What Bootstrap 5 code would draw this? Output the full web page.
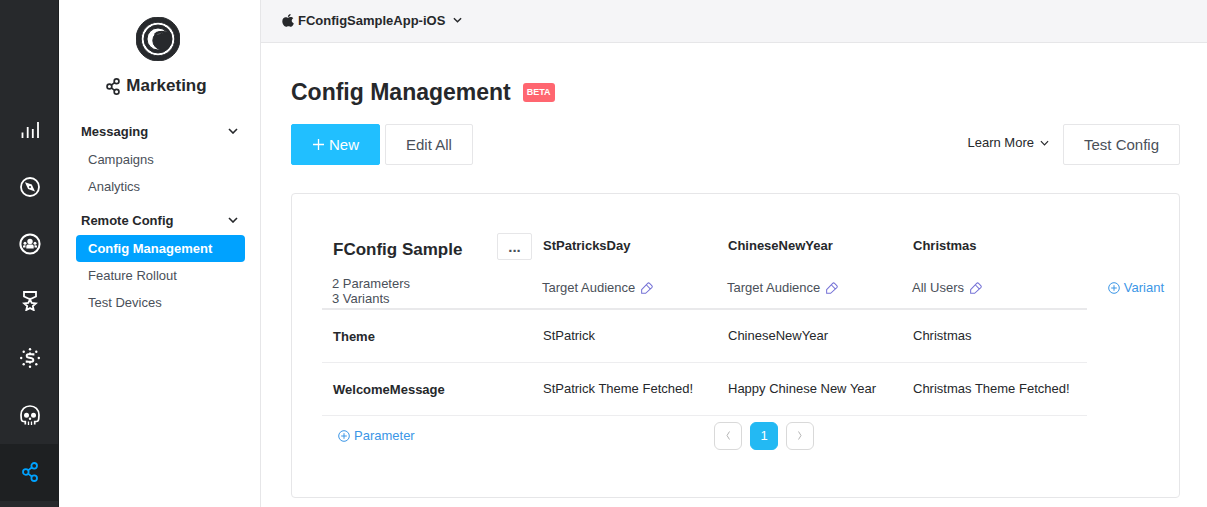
<!DOCTYPE html>
<html lang="en">
<head>
<meta charset="utf-8">
<meta name="viewport" content="width=device-width, initial-scale=1">
<title>Config Management</title>
<link href="https://cdn.jsdelivr.net/npm/bootstrap@5.3.0/dist/css/bootstrap.min.css" rel="stylesheet">
<style>
  body { font: 13px/15px "Liberation Sans", Arial, sans-serif; color: #26282b; background: #fff; }
  svg { display: block; flex: none; fill: none; stroke: currentColor; }
  a { text-decoration: none; }
  .btn-plain { border: 0; padding: 0; font-size: 13px; line-height: 15px; color: #26282b; }

  .rail { width: 59px; padding-top: 102px; background: #27292c; border-right: 1px solid #1d1f21; }
  .rail a { height: 57px; padding: 0 0 2px 1px; color: #fff; }
  .rail a.active { background: #1e2022; color: #00a2ff; }

  .side { width: 202px; padding: 17px 15px 0 17px; border-right: 1px solid #e6e6e8; }
  .side-logo { margin-right: 5px; }
  .side-title { font-size: 17px; line-height: 20px; margin: 15px 8px 22px 0; gap: 6px; }
  .group { margin-bottom: 7px; }
  .group-head { height: 28px; padding: 0 7px 2px 5px; font-weight: bold; }
  .group a { height: 27px; padding: 0 12px; color: #4a5059; border-radius: 4px; }
  .group a.active { background: #00a2ff; color: #fff; font-weight: bold; }

  .topbar { height: 43px; padding: 0 21px 2px; background: #f5f5f7; border-bottom: 1px solid #e6e6e8; }
  .page { padding: 34px 27px 9px 30px; }
  .page-head { gap: 12px; }
  .page-title { font-size: 23px; line-height: 30px; font-weight: bold; }
  .beta { background: #ff6670; font-size: 9px; line-height: 11px; padding: 4px; border-radius: 3px; }
  .btn-tall { height: 41px; padding: 0 20px; font-size: 15px; line-height: 20px; border-radius: 2px; color: #4a5059; border-color: #e6e6e8; }
  .btn-new { background: #21bfff; border-color: #21bfff; color: #fff; }
  .toolbar { margin: 17px 0 28px; gap: 5px; }
  .learn { gap: 6px; margin: 0 9px 4px auto; }

  .panel { border: 1px solid #e6e6e8; border-radius: 4px; padding: 39px 15px 47px 30px; }
  .config { table-layout: fixed; width: 100%; }
  .config th, .config td { padding: 0 11px; vertical-align: middle; overflow-wrap: break-word; }
  .config .first-col { width: 210px; }
  .config thead .names th { height: 27px; padding-bottom: 3px; }
  .config thead .names th:first-child { padding: 0 0 0 11px; }
  .config thead .targets td { padding: 16px 10px 2px; color: #4a5059; }
  .config thead { border-bottom: 2px solid #e9e9eb; }
  .config tbody tr { height: 53px; border-bottom: 1px solid #ededef; }
  .config tbody th { padding-top: 2px; }
  .sample { font-size: 17px; line-height: 20px; font-weight: bold; }
  .btn-more { width: 35px; height: 27px; padding: 0; border-color: #e6e6e8; border-radius: 2px; font-size: 15px; line-height: 20px; font-weight: bold; color: #4a5059; }
  .target { gap: 6px; padding-bottom: 7px; }
  .edit { color: #7471d6; }
  .add { color: #3b96e6; }
  .add-variant { width: 77px; padding-top: 47px; }
  .add-param { width: 119px; padding-left: 16px; }
  .table-foot { padding-top: 6px; }
  .pages .page-link { width: 28px; height: 28px; padding: 0; border-radius: 6px; border-color: #d9d9d9; color: #b4b4b4; background: #fff; font-size: 13px; line-height: 15px; }
  .pages .page-item:not(:first-child) .page-link { margin-left: 0; }
  .pages .active .page-link { background: #23b9f3; border-color: #23b9f3; color: #fff; }
</style>
</head>
<body>
<svg width="0" height="0" class="position-absolute" aria-hidden="true">
  <symbol id="chev" viewBox="0 0 10 6"><path d="M1 1l4 4 4-4"/></symbol>
  <symbol id="share" viewBox="0 0 16 20"><circle cx="3.800" cy="10" r="2.800"/><circle cx="12.200" cy="3.800" r="2.800"/><circle cx="12.200" cy="16.200" r="2.800"/><path d="M6 8.400l3.900-2.900M6 11.600l3.900 2.900"/></symbol>
  <symbol id="pen" viewBox="0 0 13 13"><path d="M.7 8.200L7.200 1.500a1.500 1.500 0 0 1 2.100 0l2.400 2.400a1.500 1.500 0 0 1 0 2.100L5 12.300H.7zM5.700 3l4.300 4.400" stroke-width="1.100"/></symbol>
  <symbol id="plus" viewBox="0 0 12 12"><circle cx="6" cy="6" r="5.300"/><path d="M6 3.200v5.600M3.200 6h5.600"/></symbol>
</svg>

<div class="d-flex min-vh-100">
  <nav class="rail d-flex flex-column flex-shrink-0" aria-label="Products">
    <a href="#" class="d-flex align-items-center justify-content-center" aria-label="Analytics">
      <svg width="18" height="18" viewBox="0 0 18 18" stroke-width="1.800"><path d="M1.500 17v-5.500M6.700 17V6M11.800 17V8M17 17V1"/></svg></a>
    <a href="#" class="d-flex align-items-center justify-content-center" aria-label="Explore">
      <svg width="20" height="20" viewBox="0 0 20 20" stroke-width="1.800"><circle cx="10" cy="10" r="9"/><path d="M5 5.300l6.800 2.200 3.200 7-6.900-2.400z" fill="currentColor" stroke="none"/><circle cx="10" cy="9.900" r="1" fill="#27292c" stroke="none"/></svg></a>
    <a href="#" class="d-flex align-items-center justify-content-center" aria-label="Audience">
      <svg width="22" height="22" viewBox="0 0 22 22" stroke-width="2"><circle cx="11" cy="11" r="9.600"/><g fill="currentColor" stroke="none"><circle cx="11" cy="8.500" r="2.700"/><path d="M7.300 15.500v-2c0-1.400 1-2 2.200-2h3c1.200 0 2.200.6 2.200 2v2z"/><circle cx="6" cy="10.200" r="1.500"/><circle cx="16" cy="10.200" r="1.500"/><path d="M4 14.500v-1c0-.9.600-1.300 1.300-1.300h1.200v2.300zM18 14.500v-1c0-.9-.6-1.300-1.300-1.300h-1.200v2.300z"/></g></svg></a>
    <a href="#" class="d-flex align-items-center justify-content-center" aria-label="Rewards">
      <svg width="16" height="20" viewBox="0 0 16 20" stroke-width="1.800"><path d="M2 1h12v4.500L8 8.300l-6-2.800z"/><path d="M8 8.300l1.700 3.500 4.200.5-3.100 2.700.9 4L8 17.100 4.300 19l.9-4-3.100-2.700 4.200-.5z"/></svg></a>
    <a href="#" class="d-flex align-items-center justify-content-center" aria-label="Revenue">
      <svg width="20" height="20" viewBox="0 0 20 20" stroke-width="2"><path d="M13.400 7.400V6.300H8.200c-1 0-1.500.6-1.500 1.600 0 1 .6 1.500 1.600 1.700l3.400.7c1 .2 1.600.7 1.600 1.700s-.6 1.700-1.600 1.700H6.700v-1.100M10 4.500v2M10 13.500v2"/><g fill="currentColor" stroke="none"><circle cx="10" cy="1.200" r="1.200"/><circle cx="10" cy="18.800" r="1.200"/><circle cx="1.200" cy="10" r="1.200"/><circle cx="18.800" cy="10" r="1.200"/><circle cx="3.700" cy="3.700" r="1.200"/><circle cx="16.300" cy="3.700" r="1.200"/><circle cx="3.700" cy="16.300" r="1.200"/><circle cx="16.300" cy="16.300" r="1.200"/></g></svg></a>
    <a href="#" class="d-flex align-items-center justify-content-center" aria-label="Crash">
      <svg width="20" height="20" viewBox="0 0 20 20" stroke-width="1.700"><path d="M5.300 19.500v-3H3.500c-1.500 0-2-1-2.200-2.500L1 10C1 4.500 5 1 10 1s9 3.500 9 9l-.3 4c-.2 1.500-.7 2.500-2.200 2.500h-1.800v3"/><path d="M8.500 20v-3.500M11.500 20v-3.500" stroke-width="1.300"/><g fill="currentColor" stroke="none"><circle cx="6.500" cy="10.300" r="2.500"/><circle cx="13.500" cy="10.300" r="2.500"/><circle cx="10" cy="13.800" r="1.200"/></g></svg></a>
    <a href="#" class="active d-flex align-items-center justify-content-center" aria-label="Marketing" aria-current="page">
      <svg width="16" height="20" stroke-width="1.800"><use href="#share"/></svg></a>
  </nav>

  <aside class="side flex-shrink-0">
    <div class="side-logo d-flex justify-content-center">
      <svg width="44" height="44" viewBox="0 0 44 44" stroke="none"><circle cx="22" cy="22" r="22" fill="#27292c"/><circle cx="22" cy="22" r="16.800" fill="#fff"/><circle cx="22" cy="22" r="14" fill="#27292c"/><circle cx="22" cy="22" r="11" fill="#fff"/><circle cx="26" cy="23.500" r="9.200" fill="#27292c"/><path d="M18.500 17.500C21 14.300 27 13.600 31.500 17.500" stroke="#27292c" stroke-width="1.500"/><path d="M20.500 17.800c2-2 5.300-2.500 8-1.500-3-.1-5 .4-6.500 1.800z" fill="#fff"/></svg>
    </div>
    <h2 class="side-title d-flex align-items-center justify-content-center fw-bold">
      <svg width="14" height="17" stroke-width="2"><use href="#share"/></svg>Marketing</h2>
    <div class="group">
      <button type="button" class="btn btn-plain group-head w-100 d-flex align-items-center justify-content-between">Messaging<svg width="10" height="6" stroke-width="1.600"><use href="#chev"/></svg></button>
      <a href="#" class="d-flex align-items-center">Campaigns</a>
      <a href="#" class="d-flex align-items-center">Analytics</a>
    </div>
    <div class="group">
      <button type="button" class="btn btn-plain group-head w-100 d-flex align-items-center justify-content-between">Remote Config<svg width="10" height="6" stroke-width="1.600"><use href="#chev"/></svg></button>
      <a href="#" class="active d-flex align-items-center" aria-current="page">Config Management</a>
      <a href="#" class="d-flex align-items-center">Feature Rollout</a>
      <a href="#" class="d-flex align-items-center">Test Devices</a>
    </div>
  </aside>

  <div class="flex-grow-1">
    <header class="topbar d-flex align-items-center">
      <button type="button" class="btn btn-plain d-flex align-items-center fw-bold">
        <svg class="me-1" width="12" height="13" viewBox="0 0 12 14" preserveAspectRatio="none"><path fill="currentColor" stroke="none" d="M8.600 0c.1 1.800-1.200 3.100-2.700 3.100C5.800 1.500 7.100.2 8.600 0zM6.100 4c.6 0 1.400-.7 2.600-.7 1 0 2 .5 2.600 1.400-2.300 1.300-1.900 4.500.5 5.400-.6 1.700-1.700 3.500-2.900 3.500-.9 0-1.300-.5-2.400-.5s-1.500.5-2.400.5C2.400 13.600.3 10.700.3 7.700c0-2.800 1.700-4.300 3.400-4.300 1.100 0 1.900.6 2.400.6z"/></svg>FConfigSampleApp-iOS<svg class="ms-2" width="9" height="6" stroke-width="1.600"><use href="#chev"/></svg></button>
    </header>

    <main class="page">
      <div class="page-head d-flex align-items-center">
        <h1 class="page-title mb-0">Config Management</h1>
        <span class="badge beta">BETA</span>
      </div>

      <div class="toolbar d-flex align-items-center">
        <button type="button" class="btn btn-tall btn-new d-flex align-items-center gap-1">
          <svg width="13" height="13" viewBox="0 0 13 13" stroke-width="1.300"><path d="M6.500 1v11M1 6.500h11"/></svg>New</button>
        <button type="button" class="btn btn-tall">Edit All</button>
        <button type="button" class="btn btn-plain learn d-flex align-items-center">Learn More<svg width="9" height="6" stroke-width="1.300"><use href="#chev"/></svg></button>
        <button type="button" class="btn btn-tall">Test Config</button>
      </div>

      <section class="panel" aria-label="FConfig Sample">
        <div class="d-flex justify-content-between">
          <div class="flex-grow-1">
            <table class="config">
              <thead>
                <tr class="names">
                  <th class="first-col"><div class="d-flex align-items-end justify-content-between"><span class="sample">FConfig Sample</span><button type="button" class="btn btn-more" aria-label="More actions">...</button></div></th>
                  <th scope="col">StPatricksDay</th>
                  <th scope="col">ChineseNewYear</th>
                  <th scope="col">Christmas</th>
                </tr>
                <tr class="targets">
                  <td>2 Parameters<br>3 Variants</td>
                  <td><div class="target d-flex align-items-center">Target Audience<a href="#" class="edit" aria-label="Edit StPatricksDay audience"><svg width="12" height="12"><use href="#pen"/></svg></a></div></td>
                  <td><div class="target d-flex align-items-center">Target Audience<a href="#" class="edit" aria-label="Edit ChineseNewYear audience"><svg width="12" height="12"><use href="#pen"/></svg></a></div></td>
                  <td><div class="target d-flex align-items-center">All Users<a href="#" class="edit" aria-label="Edit Christmas audience"><svg width="12" height="12"><use href="#pen"/></svg></a></div></td>
                </tr>
              </thead>
              <tbody>
                <tr><th scope="row">Theme</th><td>StPatrick</td><td>ChineseNewYear</td><td>Christmas</td></tr>
                <tr><th scope="row">WelcomeMessage</th><td>StPatrick Theme Fetched!</td><td>Happy Chinese New Year</td><td>Christmas Theme Fetched!</td></tr>
              </tbody>
            </table>
            <div class="table-foot d-flex align-items-center">
              <div class="add-param"><button type="button" class="btn btn-plain add d-flex align-items-center gap-1"><svg width="12" height="12"><use href="#plus"/></svg>Parameter</button></div>
              <nav class="flex-grow-1" aria-label="Parameter pages">
                <ul class="pagination pages justify-content-center gap-2 mb-0">
                  <li class="page-item"><a class="page-link d-flex align-items-center justify-content-center" href="#" aria-label="Previous"><svg width="4" height="9" viewBox="0 0 4 9"><path d="M3.500.5L1 4.500l2.500 4"/></svg></a></li>
                  <li class="page-item active"><a class="page-link d-flex align-items-center justify-content-center" href="#" aria-current="page">1</a></li>
                  <li class="page-item"><a class="page-link d-flex align-items-center justify-content-center" href="#" aria-label="Next"><svg width="4" height="9" viewBox="0 0 4 9"><path d="M.5.5L3 4.500l-2.500 4"/></svg></a></li>
                </ul>
              </nav>
            </div>
          </div>
          <div class="add-variant flex-shrink-0 d-flex justify-content-end"><button type="button" class="btn btn-plain add d-flex align-items-center gap-1 align-self-start"><svg width="12" height="12"><use href="#plus"/></svg>Variant</button></div>
        </div>
      </section>
    </main>
  </div>
</div>
<script src="https://cdn.jsdelivr.net/npm/bootstrap@5.3.0/dist/js/bootstrap.bundle.min.js"></script>
</body>
</html>
